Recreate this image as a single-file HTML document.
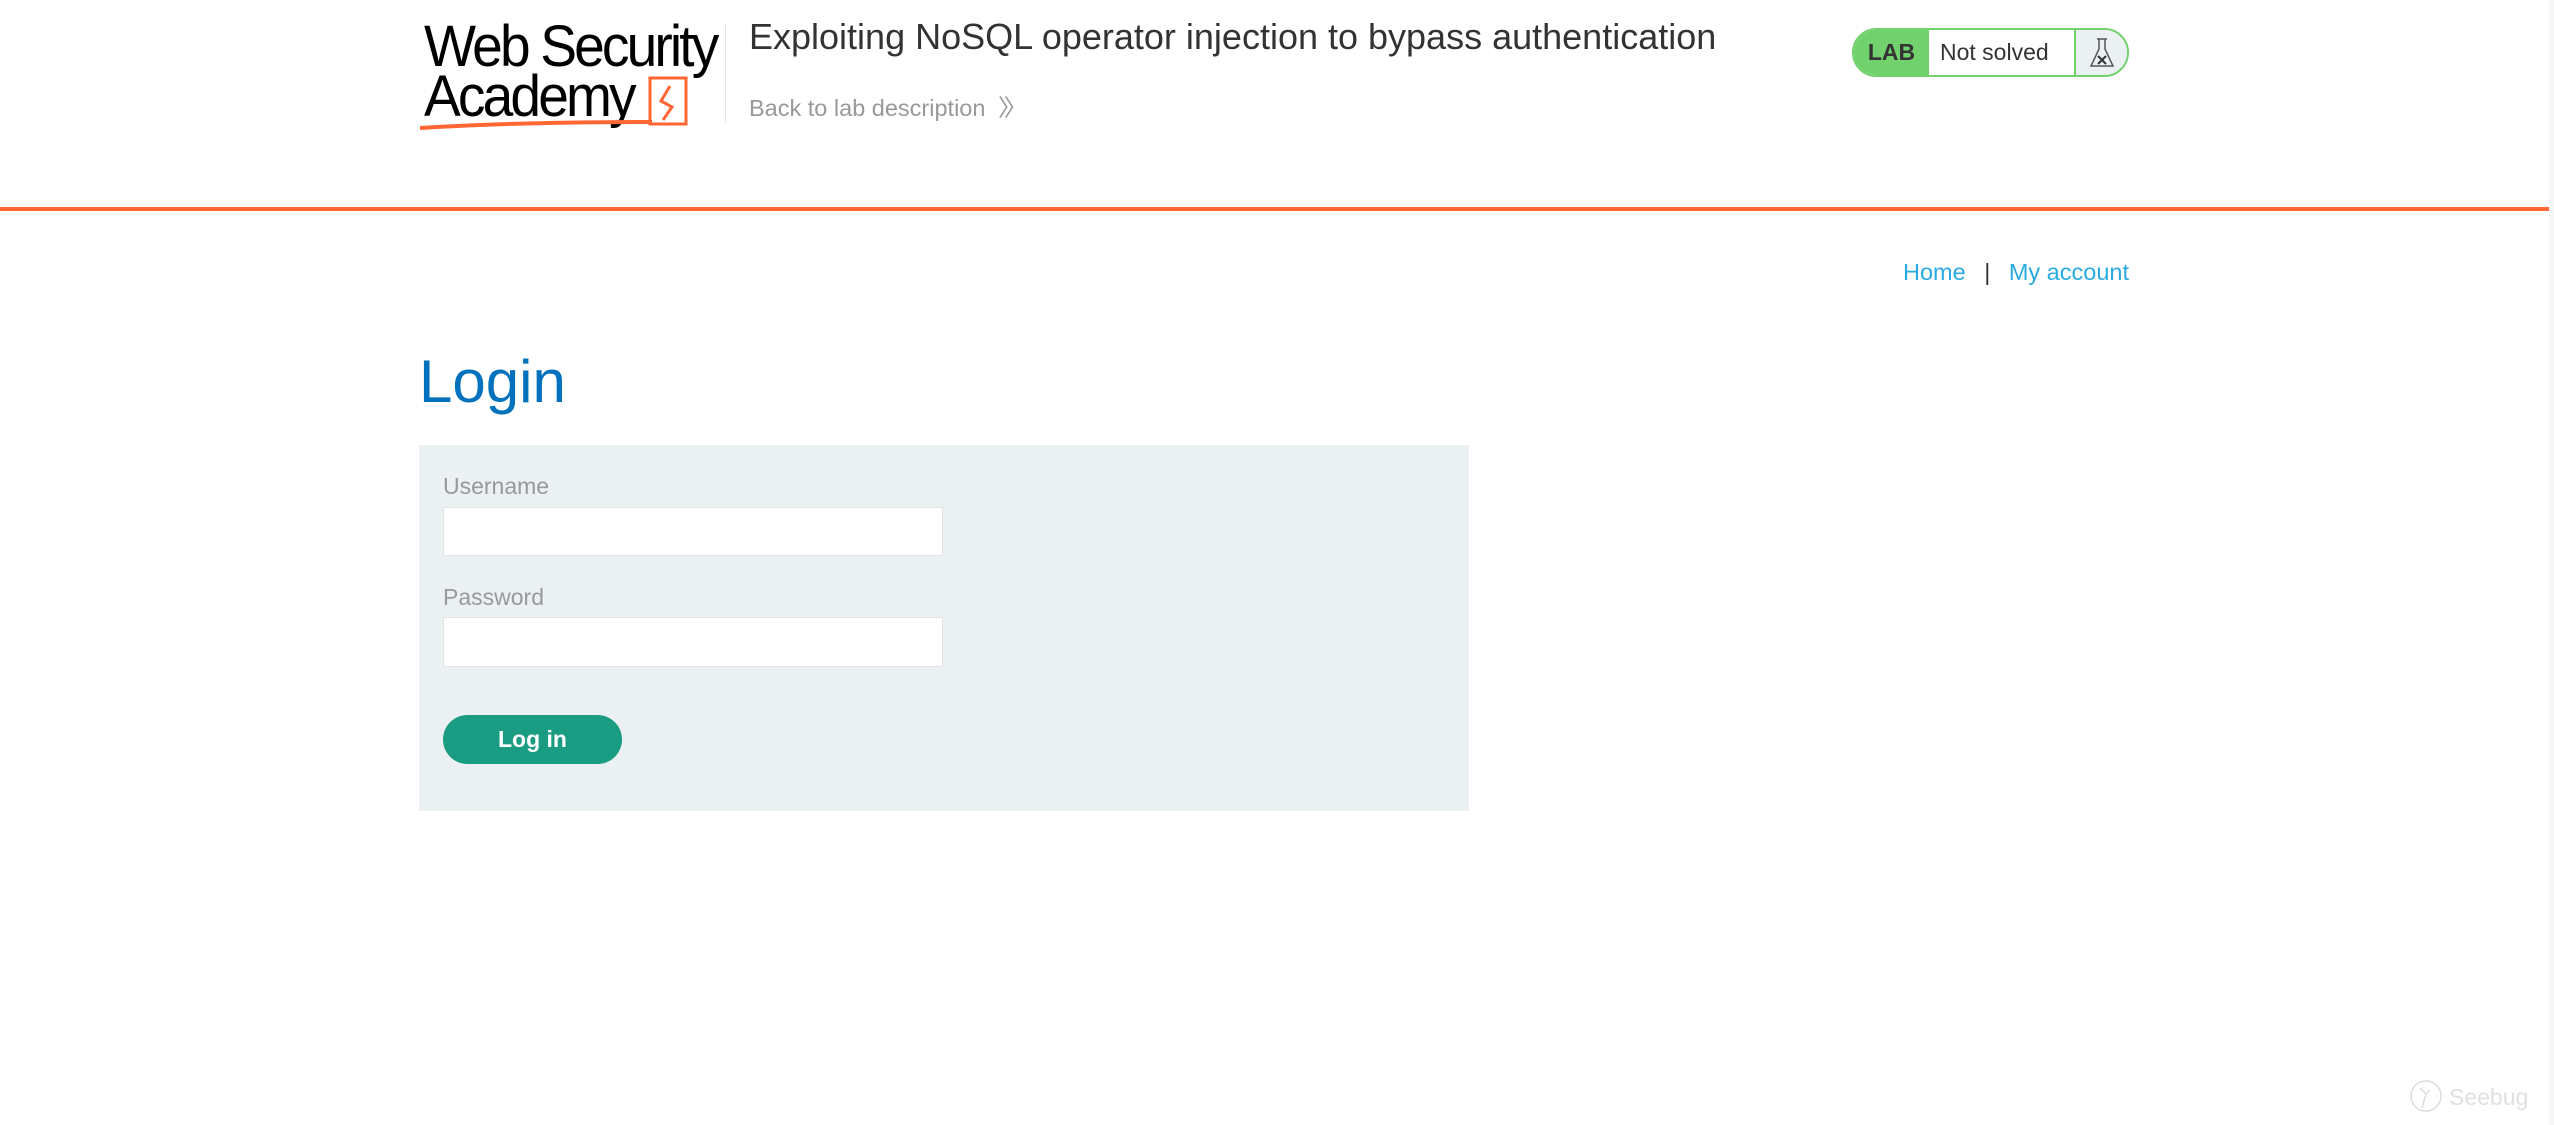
<!DOCTYPE html>
<html><head><meta charset="utf-8"><style>
*{margin:0;padding:0;box-sizing:border-box}
body{width:2554px;height:1125px;background:#fff;font-family:"Liberation Sans",Arial,sans-serif;position:relative;overflow:hidden}
.a{position:absolute}
</style></head><body>
<!-- logo -->
<div class="a" style="left:424px;top:22px;font-size:58px;letter-spacing:-3px;line-height:50px;color:#000;transform:scaleX(0.95);transform-origin:left top">Web Security<br>Academy</div>
<svg class="a" style="left:418px;top:74px" width="300" height="60" viewBox="0 0 300 60">
<rect x="232" y="4" width="36" height="46" fill="none" stroke="#ff6633" stroke-width="3"/>
<path d="M252 12 L243 27 L254 33 L245 46" fill="none" stroke="#ff6633" stroke-width="3"/>
<path d="M2 54 Q100 48 234 48" fill="none" stroke="#ff6633" stroke-width="4"/>
</svg>
<div class="a" style="left:725px;top:24px;width:1px;height:98px;background:#e6e6e6"></div>
<div class="a" style="left:749px;top:16px;font-size:36px;color:#333">Exploiting NoSQL operator injection to bypass authentication</div>
<div class="a" style="left:749px;top:89px;font-size:23.5px;color:#999">Back to lab description <span style="margin-left:6px;letter-spacing:-6px">〉〉</span></div>
<!-- badge -->
<div class="a" style="left:1852px;top:28px;width:277px;height:49px;border:2px solid #70d16d;border-radius:25px;overflow:hidden;display:flex;font-size:23px">
<div style="width:75px;background:#70d16d;color:#333;font-weight:bold;display:flex;align-items:center;justify-content:center">LAB</div>
<div style="width:147px;background:#fff;color:#333;display:flex;align-items:center;padding-left:11px;border-right:2px solid #70d16d">Not solved</div>
<div style="flex:1;background:#ebf0f2;display:flex;align-items:center;justify-content:center">
<svg width="26" height="32" viewBox="0 0 26 32"><path d="M8 2h10M10 2v10L2 29h22L16 12V2" fill="none" stroke="#555" stroke-width="1.5"/><path d="M9 19l8 8M17 19l-8 8" stroke="#333" stroke-width="2"/></svg></div>
</div>
<div class="a" style="left:0;top:207px;width:2554px;height:4px;background:#ff6633"></div>
<div class="a" style="right:425px;top:259px;font-size:23.5px;color:#29abe2">Home <span style="color:#333;margin:0 12px">|</span> My account</div>
<div class="a" style="left:419px;top:347px;font-size:60px;color:#0071bc">Login</div>
<div class="a" style="left:419px;top:445px;width:1050px;height:366px;background:#ebf0f2"></div>
<div class="a" style="left:443px;top:473px;font-size:23px;color:#999">Username</div>
<div class="a" style="left:443px;top:507px;width:500px;height:49px;background:#fff;border:1px solid #e3e3e3"></div>
<div class="a" style="left:443px;top:584px;font-size:23px;color:#999">Password</div>
<div class="a" style="left:443px;top:617px;width:500px;height:50px;background:#fff;border:1px solid #e3e3e3"></div>
<div class="a" style="left:443px;top:715px;width:179px;height:49px;background:#199c82;border-radius:25px;color:#fff;font-weight:bold;font-size:23px;display:flex;align-items:center;justify-content:center">Log in</div>
<!-- watermark -->
<svg class="a" style="left:2408px;top:1078px" width="36" height="36" viewBox="0 0 36 36"><circle cx="18" cy="18" r="15" fill="none" stroke="#ddd" stroke-width="1.5"/><path d="M12 10l6 6 4-4M18 16l-4 14" fill="none" stroke="#ddd" stroke-width="1.5"/></svg>
<div class="a" style="left:2449px;top:1084px;font-size:23px;color:#e0e0e0">Seebug</div>
<div class="a" style="left:2549px;top:0;width:5px;height:1125px;background:#f6f6f6"></div>
</body></html>
